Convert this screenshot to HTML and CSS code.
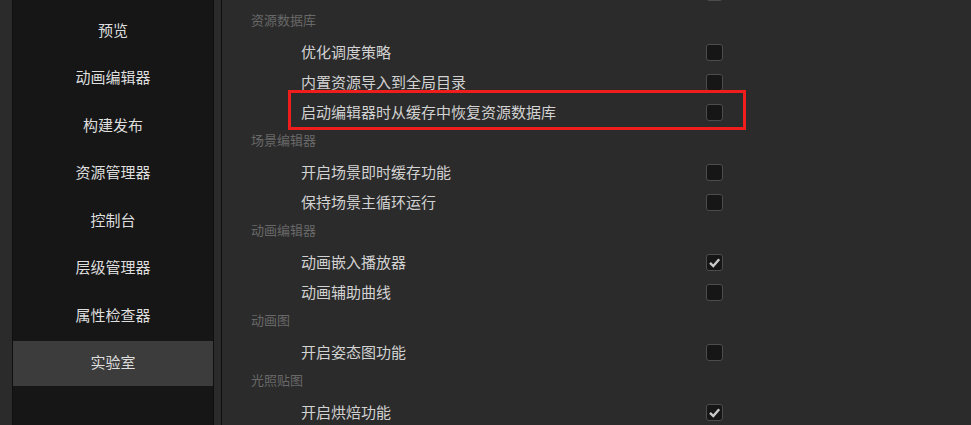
FILE: index.html
```html
<!DOCTYPE html>
<html lang="zh-CN">
<head>
    <meta charset="UTF-8">
    <title>偏好设置 - 实验室</title>
    <link rel="stylesheet" href="styles.css">
</head>
<body>

    <div class="edge"></div>

    <div class="sidebar">
        <div class="nav-item">预览</div>
        <div class="nav-item">动画编辑器</div>
        <div class="nav-item">构建发布</div>
        <div class="nav-item">资源管理器</div>
        <div class="nav-item">控制台</div>
        <div class="nav-item">层级管理器</div>
        <div class="nav-item">属性检查器</div>
        <div class="nav-item active">实验室</div>
    </div>

    <div class="splitter"></div>

    <div class="panel">
        <div class="list">
            <!-- 上一组的最后一项，只露出复选框底边 -->
            <div class="row">
                <span class="label"></span>
                <span class="check"></span>
            </div>

            <div class="group">资源数据库</div>
            <div class="row">
                <span class="label">优化调度策略</span>
                <span class="check"></span>
            </div>
            <div class="row">
                <span class="label">内置资源导入到全局目录</span>
                <span class="check"></span>
            </div>
            <div class="row marked">
                <span class="label">启动编辑器时从缓存中恢复资源数据库</span>
                <span class="check"></span>
            </div>

            <div class="group">场景编辑器</div>
            <div class="row">
                <span class="label">开启场景即时缓存功能</span>
                <span class="check"></span>
            </div>
            <div class="row">
                <span class="label">保持场景主循环运行</span>
                <span class="check"></span>
            </div>

            <div class="group">动画编辑器</div>
            <div class="row">
                <span class="label">动画嵌入播放器</span>
                <span class="check on"><svg viewBox="0 0 17 17"><polyline points="4,8.8 7.3,12 13.2,5.2"/></svg></span>
            </div>
            <div class="row">
                <span class="label">动画辅助曲线</span>
                <span class="check"></span>
            </div>

            <div class="group">动画图</div>
            <div class="row">
                <span class="label">开启姿态图功能</span>
                <span class="check"></span>
            </div>

            <div class="group">光照贴图</div>
            <div class="row">
                <span class="label">开启烘焙功能</span>
                <span class="check on"><svg viewBox="0 0 17 17"><polyline points="4,8.8 7.3,12 13.2,5.2"/></svg></span>
            </div>
        </div>
    </div>

</body>
</html>
```

FILE: styles.css
```css
/* 偏好设置窗口 */
html, body {
    margin: 0;
    height: 100%;
    overflow: hidden;
}
body {
    display: flex;
    background: #2b2b2b;
    font-family: "Noto Sans CJK SC", "Noto Sans", sans-serif;
}
.edge {
    width: 12px;
    flex: none;
    background: #2b2b2b;
    border-right: 1px solid #0f0f0f;
}
.sidebar {
    width: 200px;
    flex: none;
    background: #161616;
    border-right: 1px solid #0f0f0f;
    padding-top: 8px;
}
.nav-item {
    height: 45px;
    box-sizing: border-box;
    padding-bottom: 3px;
    margin-bottom: 2.5px;
    display: flex;
    align-items: center;
    justify-content: center;
    font-size: 15px;
    color: #dedede;
}
.nav-item.active {
    background: #3c3c3c;
}
.splitter {
    width: 7px;
    flex: none;
    background: #2b2b2b;
    border-right: 1px solid #0f0f0f;
}
.panel {
    flex: 1;
    background: #2b2b2b;
    overflow: hidden;
}
.list {
    margin-top: -23px;
}
.group {
    height: 30px;
    line-height: 26px;
    padding-left: 29px;
    font-size: 13px;
    color: #686868;
}
.row {
    position: relative;
    height: 30px;
    width: 422px;
    padding-left: 79px;
    display: flex;
    align-items: center;
    justify-content: space-between;
}
.label {
    font-size: 15px;
    color: #d2d2d2;
    margin-top: -1px;
}
.check {
    width: 17px;
    height: 17px;
    box-sizing: border-box;
    border: 1px solid #4c4c4c;
    border-radius: 3px;
    background: #161616;
}
.check svg {
    display: block;
    width: 17px;
    height: 17px;
    margin: -1px;
}
.check polyline {
    fill: none;
    stroke: #c9c9c9;
    stroke-width: 2.4;
}
/* 红色标注框 */
.row.marked::after {
    content: "";
    position: absolute;
    left: 66px;
    top: -7px;
    width: 458px;
    height: 40px;
    box-sizing: border-box;
    border: 3px solid #f01d1d;
}
```
